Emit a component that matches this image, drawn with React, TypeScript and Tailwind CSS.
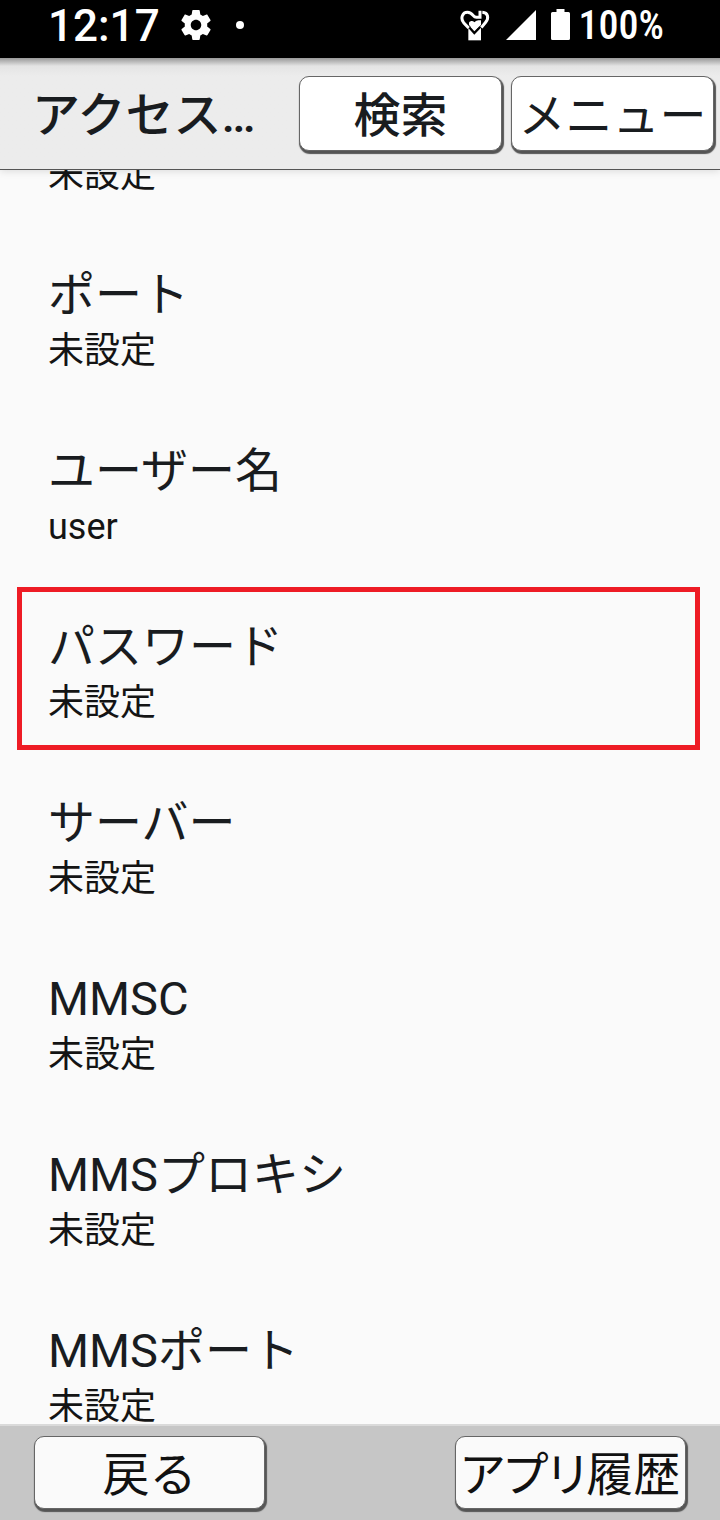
import { useLayoutEffect, useRef } from 'react';
import type { ReactNode } from 'react';

type Setting = { id: string; title?: string; value: string; highlighted?: boolean };

const settings: Setting[] = [
  { id: 'first', value: '未設定' },
  { id: 'port', title: 'ポート', value: '未設定' },
  { id: 'user', title: 'ユーザー名', value: 'user' },
  { id: 'password', title: 'パスワード', value: '未設定', highlighted: true },
  { id: 'server', title: 'サーバー', value: '未設定' },
  { id: 'mmsc', title: 'MMSC', value: '未設定' },
  { id: 'mms-proxy', title: 'MMSプロキシ', value: '未設定' },
  { id: 'mms-port', title: 'MMSポート', value: '未設定' },
];

const INITIAL_SCROLL = 113;

function GearIcon() {
  return (
    <svg className="size-9" viewBox="0 0 24 24" fill="currentColor" aria-hidden="true">
      <path d="M19.43 12.98c.04-.32.07-.64.07-.98s-.03-.66-.07-.98l2.11-1.65c.19-.15.24-.42.12-.64l-2-3.46c-.12-.22-.39-.3-.61-.22l-2.49 1c-.52-.4-1.08-.73-1.69-.98l-.38-2.65C14.46 2.18 14.25 2 14 2h-4c-.25 0-.46.18-.49.42l-.38 2.65c-.61.25-1.17.59-1.69.98l-2.49-1c-.23-.09-.49 0-.61.22l-2 3.46c-.13.22-.07.49.12.64l2.11 1.65c-.04.32-.07.65-.07.98s.03.66.07.98l-2.11 1.65c-.19.15-.24.42-.12.64l2 3.46c.12.22.39.3.61.22l2.49-1c.52.4 1.08.73 1.69.98l.38 2.65c.03.24.24.42.49.42h4c.25 0 .46-.18.49-.42l.38-2.65c.61-.25 1.17-.59 1.69-.98l2.49 1c.23.09.49 0 .61-.22l2-3.46c.12-.22.07-.49-.12-.64l-2.11-1.65zM12 15.5c-1.93 0-3.5-1.57-3.5-3.5s1.57-3.5 3.5-3.5 3.5 1.57 3.5 3.5-1.57 3.5-3.5 3.5z" />
    </svg>
  );
}

function HeartCareIcon() {
  return (
    <svg className="h-[31px] w-[30px]" viewBox="0 0 90 93" fill="none" aria-hidden="true">
      <path d="M25 50h38v41H25z" fill="currentColor" />
      <path d="M21 44 43 69 67 44" stroke="#000" strokeWidth="7" />
      <path d="M27 38c4-6 12-6 16-1 4-4 9-6 12-6h8v14L43 61 27 45z" fill="currentColor" />
      <path d="M26 54 11 38C0 24 8 7 22 7c9 0 14 5 18 10 3 4 6 5 9 5h11V2" stroke="currentColor" strokeWidth="9" />
      <path d="M67 7c18 1 20 18 10 30L64 53" stroke="currentColor" strokeWidth="9" />
    </svg>
  );
}

function KeyButton({ children, className }: { children: ReactNode; className: string }) {
  return (
    <button
      type="button"
      className={`flex items-center justify-center rounded-[10px] border border-[#666] pt-[3px] whitespace-nowrap text-[47px] leading-none shadow-[1px_2px_1px_1px_#555] ${className}`}
    >
      {children}
    </button>
  );
}

export default function App() {
  const listRef = useRef<HTMLElement>(null);

  useLayoutEffect(() => {
    if (listRef.current) listRef.current.scrollTop = INITIAL_SCROLL;
  }, []);

  return (
    <div className="flex h-screen flex-col overflow-hidden bg-[#fafafa] font-[Roboto,'Noto_Sans_CJK_JP',sans-serif] text-[#191c1f]">
      <div className="flex h-[58px] shrink-0 items-center bg-black pr-14 pb-2 pl-12 text-white">
        <span className="pt-[2px] text-[44px] leading-[50px] font-medium">12:17</span>
        <span className="ml-[18px]">
          <GearIcon />
        </span>
        <span className="ml-[22px] size-2 rounded-full bg-white" />
        <div className="ml-auto flex items-center">
          <HeartCareIcon />
          <svg className="ml-4 size-[30px]" viewBox="0 0 30 30" fill="currentColor" aria-hidden="true">
            <path d="M0 30 30 0v30z" />
          </svg>
          <svg className="ml-[15px] h-8 w-[19px]" viewBox="0 0 19 32" fill="currentColor" aria-hidden="true">
            <path d="M5.500 0h8v3H17.500A1.500 1.500 0 0 1 19 4.500v25a1.500 1.500 0 0 1-1.500 1.500h-16A1.500 1.500 0 0 1 0 29.500v-25A1.500 1.500 0 0 1 1.500 3h4z" />
          </svg>
          <span className="ml-[9px] pt-[2px] font-['Roboto_Condensed',Roboto,sans-serif] text-[40px] leading-[50px] font-medium">100%</span>
        </div>
      </div>

      <header className="relative z-10 flex h-28 shrink-0 items-start border-b border-[#555] bg-[#ececec] bg-linear-to-b from-[#999] via-[#e4e4e4] via-[8px] to-[#ececec] to-[18px] pt-[18px] pr-[6px] pl-8 shadow-[0_1px_8px_#0002]">
        <h1 className="min-w-0 flex-1 pt-[2px] text-[48px] leading-[76px] font-medium whitespace-nowrap">アクセス…</h1>
        <div className="flex gap-[9px]">
          <KeyButton className="h-[75px] w-[203px] bg-white font-medium">検索</KeyButton>
          <KeyButton className="h-[75px] w-[203px] bg-white">メニュー</KeyButton>
        </div>
      </header>

      <main ref={listRef} className="min-h-0 flex-1 overflow-y-auto [scrollbar-width:none]">
        <ul>
          {settings.map((item) => (
            <li key={item.id} className="relative h-44 px-12 pt-[34px]">
              <div className="h-14 text-[47px] leading-[56px]">{item.title}</div>
              <div className="text-[36px] leading-[56px] text-[#141414]">{item.value}</div>
              {item.highlighted && (
                <span className="pointer-events-none absolute top-[2px] right-5 left-[17px] h-[163px] border-5 border-[#ee1c25]" />
              )}
            </li>
          ))}
        </ul>
      </main>

      <footer className="flex h-24 shrink-0 items-start justify-between border-t-2 border-[#dadada] bg-[#c6c6c6] px-[34px] pt-[10px] text-[#111]">
        <KeyButton className="h-[73px] w-[231px] bg-[#fafafa]">戻る</KeyButton>
        <KeyButton className="h-[73px] w-[231px] bg-[#fafafa] [font-feature-settings:'palt']">アプリ履歴</KeyButton>
      </footer>
    </div>
  );
}
